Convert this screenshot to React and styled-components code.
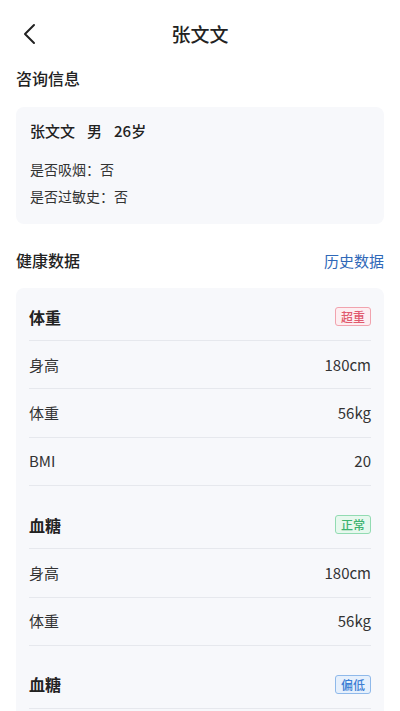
import React from 'react';
import styled, { createGlobalStyle } from 'styled-components';

const GlobalStyle = createGlobalStyle`
  html, body {
    margin: 0;
    padding: 0;
    background: #ffffff;
    font-family: "Noto Sans CJK SC", "Noto Sans", sans-serif;
    color: #222;
  }
  * { box-sizing: border-box; }
`;

const Page = styled.div`
  width: 400px;
  height: 711px;
  overflow: hidden;
  padding: 0 16px;
`;

const NavBar = styled.div`
  height: 68px;
  padding-bottom: 2px;
  display: flex;
  align-items: center;
  justify-content: center;
  position: relative;
`;

const BackButton = styled.button`
  position: absolute;
  left: 4px;
  top: 23px;
  border: none;
  background: none;
  padding: 0;
  display: flex;
  cursor: pointer;
`;

const Title = styled.h1`
  margin: 0;
  font-size: 19px;
  font-weight: 500;
  color: #222;
`;

const SectionHead = styled.div`
  display: flex;
  align-items: center;
  justify-content: space-between;
  height: ${(p) => p.h || 20}px;
  margin: ${(p) => p.m || '0'};
`;

const SectionTitle = styled.h2`
  margin: 0;
  font-size: 16px;
  font-weight: 500;
  color: #222;
`;

const LinkText = styled.a`
  font-size: 15px;
  color: #2f68b8;
  text-decoration: none;
`;

const Card = styled.div`
  background: #f7f8fb;
  border-radius: 8px;
  padding: ${(p) => p.pad || '0 13px'};
`;

const NameLine = styled.div`
  font-size: 15px;
  font-weight: 500;
  color: #222;
  display: flex;
  gap: 12px;
  margin-bottom: 15px;
`;

const InfoLine = styled.div`
  font-size: 14px;
  color: #333;
  line-height: 27px;
`;

const Group = styled.div`
  margin-top: ${(p) => (p.first ? 0 : 10)}px;
`;

const GroupHead = styled.div`
  display: flex;
  align-items: center;
  justify-content: space-between;
  padding: 18px 0 13px;
  height: 53px;
  border-bottom: 1px solid #e6e8ed;
`;

const GroupTitle = styled.span`
  font-size: 16px;
  font-weight: 700;
  color: #222;
`;

const tones = {
  red: { border: '#f1a3ae', bg: '#fdeef1', text: '#e05a6e' },
  green: { border: '#92dbb2', bg: '#e7f8ee', text: '#3cb36f' },
  blue: { border: '#8fb9ea', bg: '#e6f0fc', text: '#3b7ed4' },
};

const Badge = styled.span`
  font-size: 12px;
  font-weight: 500;
  line-height: 17px;
  padding: 0 5px;
  border-radius: 3px;
  border: 1px solid ${(p) => tones[p.tone].border};
  background: ${(p) => tones[p.tone].bg};
  color: ${(p) => tones[p.tone].text};
`;

const Row = styled.div`
  display: flex;
  align-items: center;
  justify-content: space-between;
  height: 48.4px;
  padding-bottom: 1px;
  border-bottom: 1px solid #e6e8ed;
  font-size: 15px;
  color: #333;
`;

const groups = [
  {
    title: '体重',
    badge: '超重',
    tone: 'red',
    rows: [
      ['身高', '180cm'],
      ['体重', '56kg'],
      ['BMI', '20'],
    ],
  },
  {
    title: '血糖',
    badge: '正常',
    tone: 'green',
    rows: [
      ['身高', '180cm'],
      ['体重', '56kg'],
    ],
  },
  {
    title: '血糖',
    badge: '偏低',
    tone: 'blue',
    rows: [['身高', '180cm']],
  },
];

export default function App() {
  return (
    <>
      <GlobalStyle />
      <Page>
        <NavBar>
          <BackButton aria-label="back">
            <svg width="20" height="22" viewBox="0 0 20 22" fill="none">
              <path d="M14 2 L5 11 L14 20" stroke="#222" strokeWidth="2" strokeLinecap="round" strokeLinejoin="round" />
            </svg>
          </BackButton>
          <Title>张文文</Title>
        </NavBar>

        <SectionHead h={20}>
          <SectionTitle>咨询信息</SectionTitle>
        </SectionHead>
        <Card pad="13px 14px 14px" style={{ marginTop: 19 }}>
          <NameLine>
            <span>张文文</span>
            <span>男</span>
            <span>26岁</span>
          </NameLine>
          <InfoLine>是否吸烟：否</InfoLine>
          <InfoLine>是否过敏史：否</InfoLine>
        </Card>

        <SectionHead h={22} m="25px 0 17px">
          <SectionTitle>健康数据</SectionTitle>
          <LinkText>历史数据</LinkText>
        </SectionHead>
        <Card>
          {groups.map((g, i) => (
            <Group key={i} first={i === 0}>
              <GroupHead>
                <GroupTitle>{g.title}</GroupTitle>
                <Badge tone={g.tone}>{g.badge}</Badge>
              </GroupHead>
              {g.rows.map(([k, v]) => (
                <Row key={k}>
                  <span>{k}</span>
                  <span>{v}</span>
                </Row>
              ))}
            </Group>
          ))}
        </Card>
      </Page>
    </>
  );
}
